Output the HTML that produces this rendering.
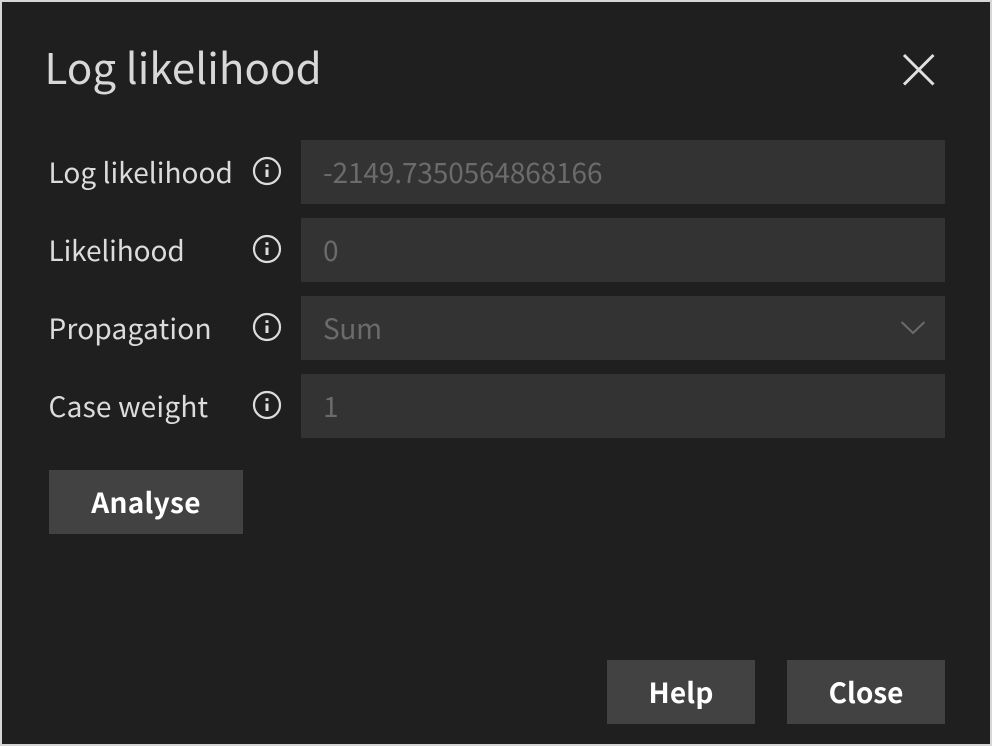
<!DOCTYPE html>
<html><head><meta charset="utf-8"><style>
html,body{margin:0;padding:0;width:992px;height:746px;overflow:hidden;background:#1f1f1f}
body{position:relative;font-family:"Noto Sans CJK JP","Liberation Sans",sans-serif}
.frame{position:absolute;left:0;top:0;width:988px;height:742px;border:2px solid #d6d6d6;background:#1f1f1f}
.a{position:absolute;white-space:nowrap}
.lab{left:48.5px;font-size:28px;line-height:38px;color:#dcdcdc}
.f{position:absolute;left:301px;width:644px;height:64px;background:#333}
.v{left:323px;font-size:28px;line-height:38px;color:#6b6b6b}
.b{position:absolute;height:64px;background:#424242;color:#fff;font-weight:700;font-size:28px;line-height:64px;text-align:center}
svg{position:absolute}
</style></head><body>
<div class="frame"></div>
<div class="a" style="left:44.5px;top:39px;font-size:42px;line-height:56px;letter-spacing:.1px;color:#d8d8d8">Log likelihood</div>
<svg style="left:900px;top:50px" width="38" height="38" fill="none" stroke="#e0e0e0" stroke-width="3"><path d="M4 5 33.500 34.500M33.500 5 4 34.500"/></svg>

<div class="a lab" style="top:153px;letter-spacing:.04px">Log likelihood</div>
<div class="a lab" style="top:231px;letter-spacing:-.12px">Likelihood</div>
<div class="a lab" style="top:309px;letter-spacing:.22px">Propagation</div>
<div class="a lab" style="top:387px;letter-spacing:.22px">Case weight</div>

<svg style="left:252px;top:156px" width="30" height="30" fill="none" stroke="#dcdcdc"><circle cx="15" cy="15" r="13" stroke-width="2.200"/><path d="M15 13.500V21" stroke-width="3"/><path d="M15 8.200V11" stroke-width="3"/></svg>
<svg style="left:252px;top:234px" width="30" height="30" fill="none" stroke="#dcdcdc"><circle cx="15" cy="15" r="13" stroke-width="2.200"/><path d="M15 13.500V21" stroke-width="3"/><path d="M15 8.200V11" stroke-width="3"/></svg>
<svg style="left:252px;top:312px" width="30" height="30" fill="none" stroke="#dcdcdc"><circle cx="15" cy="15" r="13" stroke-width="2.200"/><path d="M15 13.500V21" stroke-width="3"/><path d="M15 8.200V11" stroke-width="3"/></svg>
<svg style="left:252px;top:390px" width="30" height="30" fill="none" stroke="#dcdcdc"><circle cx="15" cy="15" r="13" stroke-width="2.200"/><path d="M15 13.500V21" stroke-width="3"/><path d="M15 8.200V11" stroke-width="3"/></svg>

<div class="f" style="top:140px"></div>
<div class="f" style="top:218px"></div>
<div class="f" style="top:296px"></div>
<div class="f" style="top:374px"></div>
<div class="a v" style="top:153px;letter-spacing:-.12px">-2149.7350564868166</div>
<div class="a v" style="top:231px">0</div>
<div class="a v" style="top:309px;letter-spacing:-.3px">Sum</div>
<div class="a v" style="top:387px">1</div>
<svg style="left:900px;top:320px" width="26" height="16" fill="none" stroke="#6b6b6b" stroke-width="2"><path d="M1.500 2 13 13 24.500 2"/></svg>

<div class="b" style="left:49px;top:470px;width:194px;letter-spacing:.3px">Analyse</div>
<div class="b" style="left:607px;top:660px;width:148px;letter-spacing:.2px">Help</div>
<div class="b" style="left:787px;top:660px;width:158px">Close</div>
</body></html>
